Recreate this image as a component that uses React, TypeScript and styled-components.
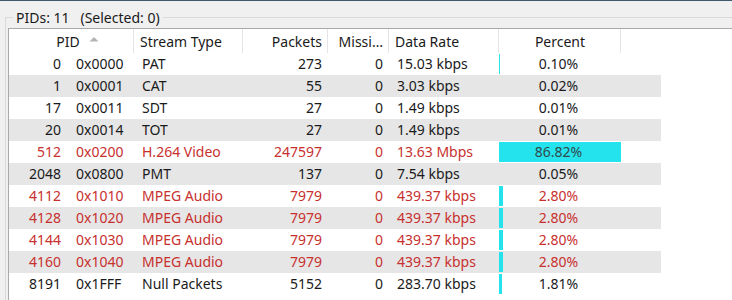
import React from 'react'
import styled, { createGlobalStyle } from 'styled-components'

interface PidRow {
    pid: number
    type: string
    packets: number
    missing: number
    rate: string
    percent: number
    video?: boolean
}

const rows: PidRow[] = [
    { pid: 0, type: 'PAT', packets: 273, missing: 0, rate: '15.03 kbps', percent: 0.1 },
    { pid: 1, type: 'CAT', packets: 55, missing: 0, rate: '3.03 kbps', percent: 0.02 },
    { pid: 17, type: 'SDT', packets: 27, missing: 0, rate: '1.49 kbps', percent: 0.01 },
    { pid: 20, type: 'TOT', packets: 27, missing: 0, rate: '1.49 kbps', percent: 0.01 },
    { pid: 512, type: 'H.264 Video', packets: 247597, missing: 0, rate: '13.63 Mbps', percent: 86.82, video: true },
    { pid: 2048, type: 'PMT', packets: 137, missing: 0, rate: '7.54 kbps', percent: 0.05 },
    { pid: 4112, type: 'MPEG Audio', packets: 7979, missing: 0, rate: '439.37 kbps', percent: 2.8, video: true },
    { pid: 4128, type: 'MPEG Audio', packets: 7979, missing: 0, rate: '439.37 kbps', percent: 2.8, video: true },
    { pid: 4144, type: 'MPEG Audio', packets: 7979, missing: 0, rate: '439.37 kbps', percent: 2.8, video: true },
    { pid: 4160, type: 'MPEG Audio', packets: 7979, missing: 0, rate: '439.37 kbps', percent: 2.8, video: true },
    { pid: 8191, type: 'Null Packets', packets: 5152, missing: 0, rate: '283.70 kbps', percent: 1.81 },
]

const COLS = '125px 109px 85px 61px 110px 122px'
const maxPercent = Math.max(...rows.map(r => r.percent))

const hex = (n: number) => '0x' + n.toString(16).toUpperCase().padStart(4, '0')

export default function App() {
    return (
        <>
            <GlobalStyle />
            <Window>
                <GroupBox>
                    <Legend>PIDs: 11&nbsp;&nbsp;&nbsp;(Selected: 0)</Legend>
                    <ListBox>
                        <HeaderRow>
                            <HeaderCell align="center">
                                <PidTitle>PID</PidTitle> <SortArrow />
                            </HeaderCell>
                            <HeaderCell align="left">Stream Type</HeaderCell>
                            <HeaderCell align="right">Packets</HeaderCell>
                            <HeaderCell align="right">Missi…</HeaderCell>
                            <HeaderCell align="left">Data Rate</HeaderCell>
                            <HeaderCell align="center">Percent</HeaderCell>
                        </HeaderRow>
                        {rows.map((r, i) => {
                            const share = r.percent / maxPercent
                            return (
                                <Row key={r.pid} striped={i % 2 === 1} red={!!r.video}>
                                    <PidCell>
                                        <PidNum>{r.pid}</PidNum>
                                        <PidHex>{hex(r.pid)}</PidHex>
                                    </PidCell>
                                    <Cell align="left">{r.type}</Cell>
                                    <Cell align="right">{r.packets}</Cell>
                                    <Cell align="right">{r.missing}</Cell>
                                    <Cell align="left">{r.rate}</Cell>
                                    <PercentCell>
                                        <Bar style={{ width: `${share * 100}%` }} />
                                        <PercentLabel covered={share > 0.5}>{r.percent.toFixed(2)}%</PercentLabel>
                                    </PercentCell>
                                </Row>
                            )
                        })}
                    </ListBox>
                </GroupBox>
            </Window>
        </>
    )
}

function SortArrow() {
    return (
        <ArrowSvg width="10" height="6" viewBox="0 0 10 6">
            <path d="M0.5 5.5 L5 1 L9.5 5.5 Z" fill="#b3b3b3" />
        </ArrowSvg>
    )
}

const GlobalStyle = createGlobalStyle`
    html, body {
        margin: 0;
        padding: 0;
        background: #f0f0f0;
        font-family: "Noto Sans", "Open Sans", sans-serif;
    }
`

const Window = styled.div`
    width: 732px;
    height: 300px;
    overflow: hidden;
    border-top: 1px solid #3b5a70;
    box-sizing: border-box;
    background: #f0f0f0;
`

const GroupBox = styled.fieldset`
    margin: 7px 0 0 5px;
    padding: 1px 0 0 2px;
    border: none;
    border-top: 1px solid #d9d9d9;
    border-left: 1px solid #d9d9d9;
    min-width: 0;
    height: 320px;
`

const Legend = styled.legend`
    margin-left: 5px;
    padding: 0 3px 0 3px;
    font-size: 14px;
    line-height: 19px;
    color: #1a1a1a;
`

const ListBox = styled.div`
    background: #ffffff;
    border-top: 1px solid #a9a9a9;
    border-left: 1px solid #a9a9a9;
    height: 300px;
    font-size: 14px;
    color: #1c1c1c;
`

const HeaderRow = styled.div`
    display: grid;
    grid-template-columns: ${COLS};
    height: 24px;
`

const HeaderCell = styled.div<{ align: 'left' | 'right' | 'center' }>`
    display: flex;
    align-items: center;
    justify-content: ${p => (p.align === 'left' ? 'flex-start' : p.align === 'right' ? 'flex-end' : 'center')};
    padding: 0 5px 0 6px;
    border-right: 1px solid #e5e5e5;
    white-space: nowrap;
    overflow: hidden;
    color: #1a1a1a;
`

const PidTitle = styled.span`
    margin-left: 12px;
`

const ArrowSvg = styled.svg`
    margin-left: 9px;
    margin-bottom: 4px;
`

const Row = styled.div<{ striped: boolean; red: boolean }>`
    display: grid;
    grid-template-columns: ${COLS};
    width: 652px;
    height: 22px;
    line-height: 22px;
    background: ${p => (p.striped ? '#e6e6e6' : '#ffffff')};
    color: ${p => (p.red ? '#c8302e' : '#1a1a1a')};
`

const Cell = styled.div<{ align: 'left' | 'right' }>`
    text-align: ${p => p.align};
    padding: ${p => (p.align === 'left' ? '0 0 0 8px' : '0 6px 0 0')};
    white-space: nowrap;
    overflow: hidden;
`

const PidCell = styled.div`
    display: grid;
    grid-template-columns: 52px 1fr;
    column-gap: 15px;
    white-space: nowrap;
`

const PidNum = styled.span`
    text-align: right;
`

const PidHex = styled.span``

const PercentCell = styled.div`
    display: grid;
    grid-template-columns: 1fr;
    grid-template-rows: 1fr;
`

const Bar = styled.div`
    grid-area: 1 / 1;
    margin: 1px 0;
    background: #25e3ec;
    min-width: 0;
`

const PercentLabel = styled.span<{ covered: boolean }>`
    grid-area: 1 / 1;
    text-align: center;
    padding-right: 3px;
    color: ${p => (p.covered ? '#2f4a4d' : 'inherit')};
`
